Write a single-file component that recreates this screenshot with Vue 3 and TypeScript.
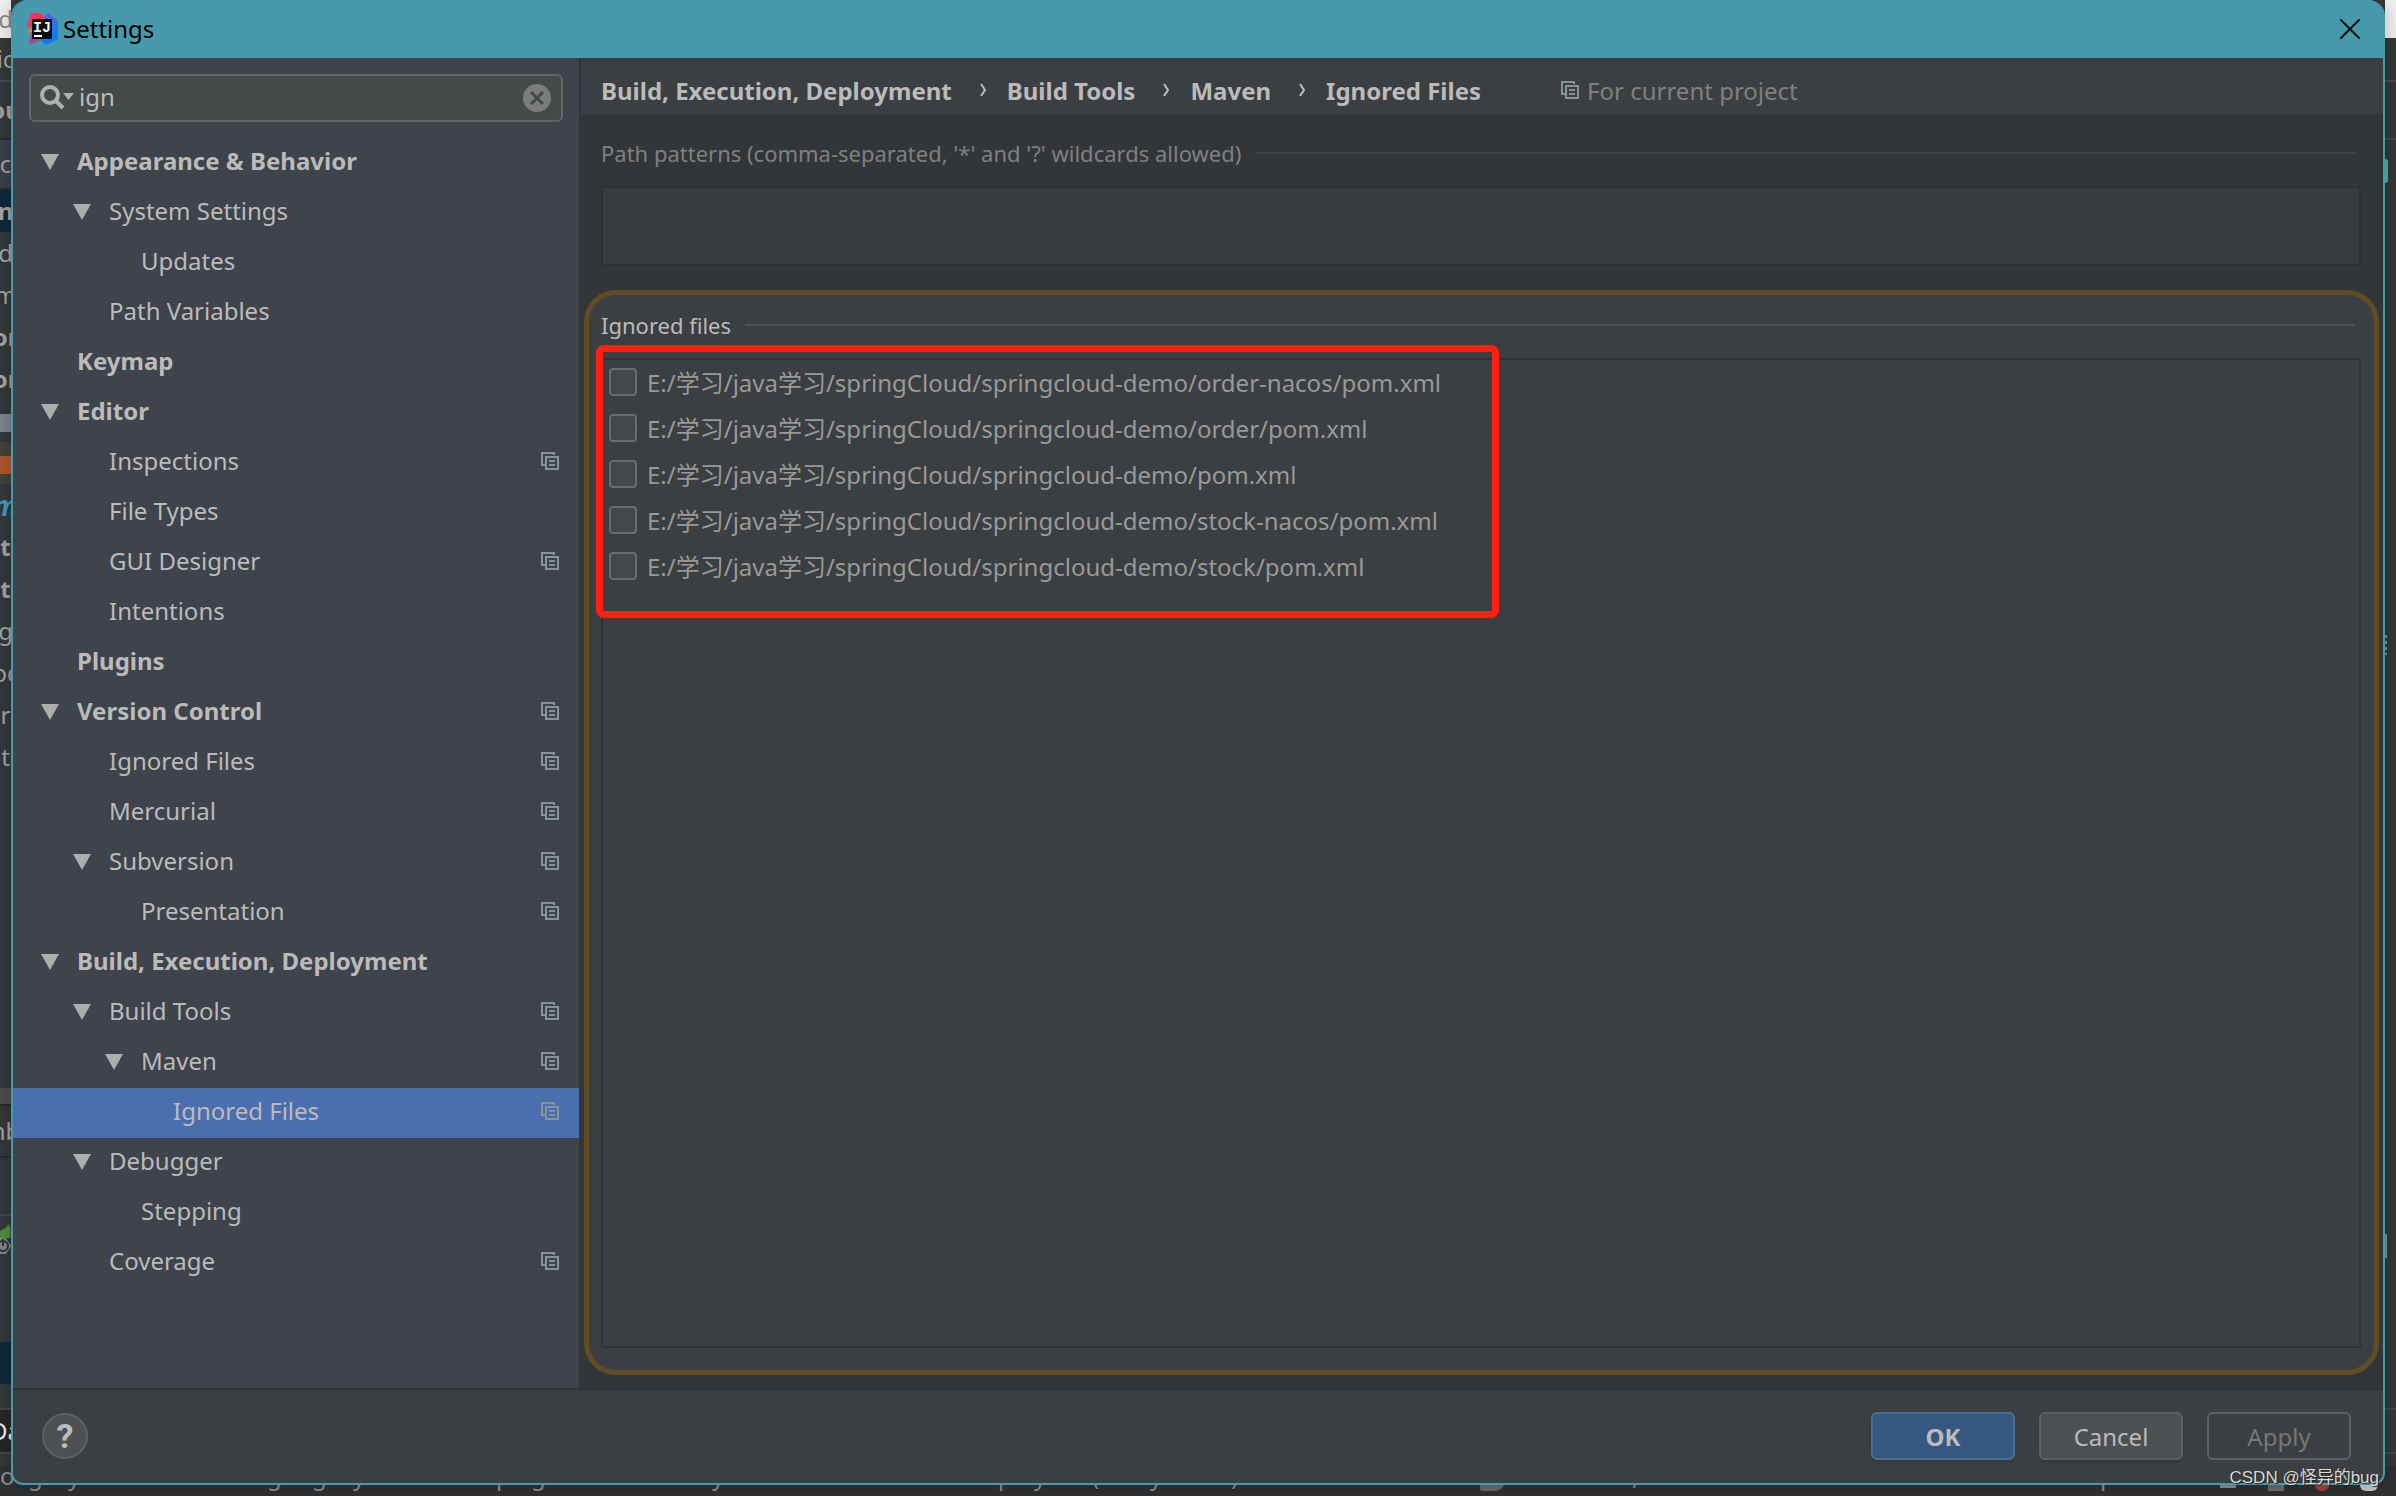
<script setup lang="ts">
import { ref } from 'vue'

interface TreeNode {
  label: string
  depth: number
  open?: boolean
  bold?: boolean
  project?: boolean
  selected?: boolean
}

interface EdgeRow {
  text: string
  kind?: string
}

const query = ref('ign')
const patterns = ref('')

const nodes: TreeNode[] = [
  { label: 'Appearance & Behavior', depth: 0, open: true, bold: true },
  { label: 'System Settings', depth: 1, open: true },
  { label: 'Updates', depth: 2 },
  { label: 'Path Variables', depth: 1 },
  { label: 'Keymap', depth: 0, bold: true },
  { label: 'Editor', depth: 0, open: true, bold: true },
  { label: 'Inspections', depth: 1, project: true },
  { label: 'File Types', depth: 1 },
  { label: 'GUI Designer', depth: 1, project: true },
  { label: 'Intentions', depth: 1 },
  { label: 'Plugins', depth: 0, bold: true },
  { label: 'Version Control', depth: 0, open: true, bold: true, project: true },
  { label: 'Ignored Files', depth: 1, project: true },
  { label: 'Mercurial', depth: 1, project: true },
  { label: 'Subversion', depth: 1, open: true, project: true },
  { label: 'Presentation', depth: 2, project: true },
  { label: 'Build, Execution, Deployment', depth: 0, open: true, bold: true },
  { label: 'Build Tools', depth: 1, open: true, project: true },
  { label: 'Maven', depth: 2, open: true, project: true },
  { label: 'Ignored Files', depth: 3, project: true, selected: true },
  { label: 'Debugger', depth: 1, open: true },
  { label: 'Stepping', depth: 2 },
  { label: 'Coverage', depth: 1, project: true },
]

const crumbs = ['Build, Execution, Deployment', 'Build Tools', 'Maven', 'Ignored Files']

const files = ref(
  ['order-nacos/pom.xml', 'order/pom.xml', 'pom.xml', 'stock-nacos/pom.xml', 'stock/pom.xml'].map((f) => ({
    path: 'E:/学习/java学习/springCloud/springcloud-demo/' + f,
    ignored: false,
  })),
)

const edgeRows: EdgeRow[] = [
  { text: 'n', kind: 'navy strong' },
  { text: 'd' },
  { text: 'm' },
  { text: 'or', kind: 'strong' },
  { text: 'or', kind: 'strong' },
  { text: '', kind: 'grey-mark' },
  { text: '', kind: 'orange-mark' },
  { text: 'm', kind: 'module' },
  { text: 't', kind: 'strong' },
  { text: 't', kind: 'strong' },
  { text: 'g' },
  { text: 'oc' },
  { text: 'r' },
  { text: 't' },
]

const statusGlyphs = [
  { ch: 'o', x: 0 },
  { ch: 'g', x: 28 },
  { ch: 'y', x: 68 },
  { ch: 'g', x: 267 },
  { ch: 'g', x: 312 },
  { ch: 'y', x: 353 },
  { ch: 'p', x: 496 },
  { ch: 'g', x: 531 },
  { ch: 'y', x: 712 },
  { ch: 'p', x: 998 },
  { ch: 'y', x: 1034 },
  { ch: '(', x: 1092 },
  { ch: 'y', x: 1150 },
  { ch: ')', x: 1231 },
  { ch: ',', x: 1632 },
  { ch: 'p', x: 2100 },
]
</script>

<template>
  <div class="screen">
    <div class="backdrop" aria-hidden="true">
      <div class="edge">
        <div class="edge-top">d</div>
        <div class="edge-menu">ic</div>
        <div class="edge-bar strong">ou</div>
        <div class="edge-tab">c</div>
        <div v-for="(r, i) in edgeRows" :key="i" class="edge-row" :class="r.kind">{{ r.text }}</div>
        <div class="edge-space"></div>
        <div class="edge-split"></div>
        <div class="edge-head">nb</div>
        <div class="edge-tools"></div>
        <div class="edge-run">
          <svg width="11" height="32" viewBox="0 0 11 32">
            <path d="M0 7C4 5 7 3 9 0C11 6 11 11 10 14H0Z" fill="#4f8f3a" />
            <path d="M-4 14H6L11 22L6 30H-4Z" fill="#7d8990" />
            <circle cx="3" cy="22" r="5" fill="none" stroke="#2f3436" stroke-width="2" />
            <path d="M3 15V22" stroke="#2f3436" stroke-width="2" />
          </svg>
        </div>
        <div class="edge-navy"></div>
        <div class="edge-gap"></div>
        <div class="edge-data">Da</div>
      </div>
      <div class="edge edge-right">
        <div class="edge-top"></div>
        <div class="edge-menu"></div>
        <div class="edge-bar"></div>
        <div class="edge-pill"></div>
        <div class="edge-ticks"></div>
        <div class="edge-mark"></div>
        <div class="edge-data plain"></div>
      </div>
      <div class="status">
        <span v-for="g in statusGlyphs" :key="g.x" :style="{ left: g.x + 'px' }">{{ g.ch }}</span>
        <i class="blob grey"></i>
        <i class="blob light"></i>
        <i class="blob dim"></i>
        <i class="blob red"></i>
        <i class="blob white"></i>
      </div>
    </div>

    <main class="dialog">
      <header class="titlebar">
        <svg class="logo" width="32" height="32" viewBox="0 0 32 32">
          <defs>
            <linearGradient id="lg-blue" x1="0" y1="0" x2="0.4" y2="1">
              <stop offset="0" stop-color="#6b57d2" />
              <stop offset="0.5" stop-color="#2d74e8" />
              <stop offset="1" stop-color="#087cfa" />
            </linearGradient>
          </defs>
          <path d="M16 5L21 0L31 8V26L19 32L12 26Z" fill="url(#lg-blue)" />
          <path d="M4 0H13L20 7V14H0Z" fill="#fe315d" />
          <path d="M5 14L1 18L5 22Z" fill="#f97a12" />
          <path d="M4 19L2 32L16 26V19Z" fill="#9a4c9c" />
          <rect x="5" y="6" width="20" height="20" fill="#0a0a0a" />
          <text class="logo-text" x="6" y="19">IJ</text>
          <path d="M7 23H15" stroke="#fff" stroke-width="2" />
        </svg>
        <h1>Settings</h1>
        <button class="close" type="button" aria-label="Close">
          <svg width="20" height="20" viewBox="0 0 20 20"><path d="M0 0L20 20M20 0L0 20" stroke="#111" stroke-width="2" /></svg>
        </button>
      </header>

      <div class="body">
        <aside class="sidebar">
          <label class="search">
            <svg width="36" height="26" viewBox="0 0 36 26">
              <circle cx="10" cy="10" r="8" fill="none" stroke="#afb1b3" stroke-width="4" />
              <path d="M15 15L23 23" stroke="#afb1b3" stroke-width="4" />
              <path d="M23 8H34L28.500 15Z" fill="#afb1b3" />
            </svg>
            <input v-model="query" type="text" aria-label="Search settings" />
            <button type="button" class="clear" aria-label="Clear search">
              <svg width="28" height="28" viewBox="0 0 28 28">
                <circle cx="14" cy="14" r="14" fill="#7b7c7c" />
                <path d="M8 8L20 20M20 8L8 20" stroke="#45494a" stroke-width="3" />
              </svg>
            </button>
          </label>
          <nav class="tree">
            <a
              v-for="(n, i) in nodes"
              :key="i"
              href="#"
              class="node"
              :class="['depth-' + n.depth, { bold: n.bold, selected: n.selected }]"
            >
              <span class="toggle">
                <svg v-if="n.open" width="18" height="16" viewBox="0 0 18 16"><path d="M0 0H18L9 16Z" fill="#adadad" /></svg>
              </span>
              <span class="node-label">{{ n.label }}</span>
              <svg v-if="n.project" class="copy" width="18" height="18" viewBox="0 0 18 18">
                <path d="M4 13H1V1H13V3" fill="none" stroke="currentColor" stroke-width="2" />
                <path d="M5 5H17V17H5ZM8 9H14M8 13H14" fill="none" stroke="currentColor" stroke-width="2" />
              </svg>
            </a>
          </nav>
        </aside>

        <section class="content">
          <div class="crumbs">
            <template v-for="(c, i) in crumbs" :key="c">
              <svg v-if="i" class="chevron" width="7" height="14" viewBox="0 0 7 14">
                <path d="M1 1L5 7L1 13" fill="none" stroke="#bbb" stroke-width="2" />
              </svg>
              <a href="#">{{ c }}</a>
            </template>
            <span class="scope">
              <svg class="copy" width="18" height="18" viewBox="0 0 18 18">
                <path d="M4 13H1V1H13V3" fill="none" stroke="currentColor" stroke-width="2" />
                <path d="M5 5H17V17H5ZM8 9H14M8 13H14" fill="none" stroke="currentColor" stroke-width="2" />
              </svg>
              For current project
            </span>
          </div>

          <div class="patterns">
            <label class="group-title" for="patterns">Path patterns (comma-separated, '*' and '?' wildcards allowed)</label>
            <textarea id="patterns" v-model="patterns"></textarea>
          </div>

          <div class="highlight">
            <h2 class="group-title">Ignored files</h2>
            <div class="list">
              <label v-for="f in files" :key="f.path" class="file">
                <input v-model="f.ignored" type="checkbox" />
                <span>{{ f.path }}</span>
              </label>
              <div class="marker"></div>
            </div>
          </div>
        </section>
      </div>

      <footer class="footer">
        <button type="button" class="help">?</button>
        <button type="button" class="btn primary">OK</button>
        <button type="button" class="btn">Cancel</button>
        <button type="button" class="btn" disabled>Apply</button>
      </footer>
    </main>

    <div class="watermark">CSDN @怪异的bug</div>
  </div>
</template>

<style>
body {
  margin: 0;
  background: #333638;
}
</style>

<style scoped>
.screen {
  position: relative;
  display: flex;
  min-height: 100vh;
  overflow: hidden;
  box-sizing: border-box;
  padding: 0 11px 11px;
  font-family: 'Noto Sans', 'Noto Sans CJK SC', sans-serif;
  font-size: 24px;
  color: #bbbbbb;
}
.screen *,
.screen *::before {
  box-sizing: border-box;
}
a {
  color: inherit;
  text-decoration: none;
}
button,
input,
textarea {
  font: inherit;
  color: inherit;
}

/* application window showing around the dialog */
.backdrop {
  position: absolute;
  inset: 0;
  background: #353839;
}
.edge {
  position: absolute;
  top: 0;
  left: 0;
  width: 11px;
  height: 100%;
  overflow: hidden;
  display: flex;
  flex-direction: column;
  color: #a5a5a5;
}
.edge-right {
  left: auto;
  right: 0;
}
.edge > div {
  display: flex;
  flex-shrink: 0;
  align-items: center;
  justify-content: center;
  line-height: 42px;
}
.edge-top {
  height: 38px;
  background: #f1f1f1;
  color: #8a8a8a;
}
.edge-menu {
  height: 44px;
  border-bottom: 2px solid #4b4b4b;
}
.edge-bar {
  height: 58px;
  border-bottom: 2px solid #2b2b2b;
}
.edge-right .edge-bar {
  border-color: #46484a;
}
.edge-tab {
  height: 50px;
  background: #38424e;
  border-bottom: 2px solid #2b2b2b;
}
.edge-row {
  height: 42px;
}
.strong {
  font-weight: 700;
}
.navy,
.edge-navy {
  background: #0d293e;
}
.grey-mark {
  border: solid transparent;
  border-width: 14px 0 10px;
  background: #7b868c padding-box;
}
.orange-mark {
  background: linear-gradient(#45423a 14px, #b0582e 14px 32px, #45423a 32px);
}
.module {
  color: #3c9cc4;
  font-size: 28px;
  font-style: italic;
  font-weight: 700;
}
.edge-space {
  height: 310px;
}
.edge-split {
  height: 18px;
  background: #4b4d4e;
  border-bottom: 2px solid #2b2b2b;
}
.edge-head {
  height: 52px;
  border-bottom: 2px solid #2b2b2b;
}
.edge-tools {
  height: 58px;
  border-bottom: 2px solid #444748;
}
.edge-run {
  height: 48px;
}
.edge-navy {
  height: 42px;
  margin-top: 78px;
}
.edge-gap {
  height: 24px;
}
.edge-data {
  height: 46px;
  border: solid #444748;
  border-width: 2px 0;
  background: #242627;
  color: #f0f0f0;
}
.edge-data.plain {
  background: none;
}
.edge-pill {
  width: 3px;
  height: 24px;
  margin: 19px 8px 0 0;
  border-radius: 0 3px 3px 0;
  background: #36c29a;
}
.edge-ticks {
  width: 2px;
  height: 20px;
  margin-top: 452px;
  background: repeating-linear-gradient(#8b8d8e 0 3px, transparent 3px 6px);
}
.edge-mark {
  width: 2px;
  height: 24px;
  margin: 579px 0 150px;
  background: #8b8d8e;
}
.status {
  position: absolute;
  inset: auto 0 0 0;
  height: 30px;
  line-height: 32px;
  background: #2f3132;
  overflow: hidden;
  color: #8f9192;
}
.status span {
  position: absolute;
  top: -6px;
}
.blob {
  position: absolute;
  bottom: 5px;
  height: 10px;
}
.blob.grey {
  left: 1480px;
  width: 25px;
  border-radius: 0 0 10px 2px;
  background: #696b6c;
}
.blob.light {
  right: 160px;
  width: 16px;
  bottom: 8px;
  background: #8b8d8e;
}
.blob.dim {
  right: 112px;
  width: 16px;
  background: #6b6d6e;
}
.blob.red {
  right: 66px;
  width: 16px;
  border-radius: 0 0 8px 8px;
  background: #a8403a;
}
.blob.white {
  right: 18px;
  width: 18px;
  border-radius: 0 0 6px 6px;
  background: #c9cbcc;
}

/* dialog frame */
.dialog {
  position: relative;
  flex: 1;
  min-width: 0;
  display: flex;
  flex-direction: column;
  overflow: hidden;
  border: solid #469aab;
  border-width: 0 2px 2px;
  border-radius: 16px 16px 12px 12px;
  background: #3c3f41;
  box-shadow: 0 0 20px rgba(0, 0, 0, 0.25);
}
.titlebar {
  display: flex;
  align-items: center;
  gap: 4px;
  height: 58px;
  padding: 0 23px 0 14px;
  background: #469aab;
  color: #000;
}
.logo-text {
  fill: #fff;
  font-family: 'Liberation Mono', monospace;
  font-size: 15px;
  font-weight: 700;
}
h1 {
  flex: 1;
  margin: 0;
  padding-bottom: 2px;
  font-size: 24px;
  font-weight: 400;
}
.close {
  display: flex;
  padding: 0;
  border: 0;
  background: none;
}
.body {
  flex: 1;
  display: flex;
}
.sidebar {
  flex: none;
  width: 568px;
  border-right: 2px solid #333536;
  background: #3f434c;
}
.search {
  display: flex;
  align-items: center;
  height: 48px;
  margin: 16px;
  padding: 0 10px 0 9px;
  border: 2px solid #646464;
  border-radius: 6px;
  background: #45494a;
}
.search input {
  flex: 1;
  min-width: 0;
  height: 40px;
  padding: 0 0 4px 3px;
  border: 0;
  outline: 0;
  background: none;
}
.clear {
  display: flex;
  padding: 0;
  border: 0;
  background: none;
}
.node {
  display: flex;
  align-items: center;
  height: 50px;
  padding: 0 20px 4px 28px;
}
.depth-1 {
  padding-left: 60px;
}
.depth-2 {
  padding-left: 92px;
}
.depth-3 {
  padding-left: 124px;
}
.toggle {
  display: flex;
  flex: none;
  width: 36px;
  padding-top: 2px;
}
.node-label {
  flex: 1;
  padding-bottom: 2px;
  white-space: nowrap;
}
.bold {
  font-weight: 700;
}
.selected {
  background: #4b6eaf;
}
.copy {
  flex: none;
  color: #87939a;
}

/* right pane */
.content {
  flex: 1;
  min-width: 0;
  display: flex;
  flex-direction: column;
  background: #333638;
}
.crumbs {
  display: flex;
  align-items: center;
  height: 56px;
  padding: 8px 20px 0;
  background: #3c3f41;
  font-weight: 700;
  white-space: nowrap;
}
.chevron {
  margin: 0 20px 0 28px;
}
.scope {
  display: flex;
  align-items: center;
  gap: 8px;
  margin-left: 80px;
  color: #808080;
  font-weight: 400;
}
.group-title {
  display: flex;
  align-items: center;
  gap: 14px;
  margin: 0;
  font-size: 22px;
  font-weight: 400;
  white-space: nowrap;
}
.group-title::after {
  content: '';
  flex: 1;
  height: 2px;
  margin-right: 6px;
  background: #515151;
}
.patterns {
  padding: 0 22px 24px 20px;
  color: #808080;
}
.patterns .group-title {
  height: 72px;
  padding-top: 6px;
}
.patterns .group-title::after {
  background: #404344;
}
.patterns textarea {
  display: block;
  width: 100%;
  height: 80px;
  border: 2px solid #2e3031;
  outline: 0;
  resize: none;
  background: #393c3e;
}
.highlight {
  flex: 1;
  display: flex;
  flex-direction: column;
  margin: 0 4px 13px 3px;
  padding: 0 13px 22px 12px;
  border: 5px solid #604d26;
  border-radius: 32px;
  background: #3c3f41;
}
.highlight .group-title {
  height: 63px;
  padding-bottom: 4px;
}
.list {
  position: relative;
  flex: 1;
  padding: 8px 6px;
  border: 2px solid #323232;
}
.file {
  display: flex;
  gap: 10px;
  height: 46px;
  color: #999999;
  white-space: nowrap;
}
.file input {
  flex: none;
  appearance: none;
  width: 28px;
  height: 28px;
  margin: 0;
  border: 2px solid #6b6b6b;
  border-radius: 4px;
  background: #43494a;
}
.file span {
  height: 30px;
  line-height: 30px;
}
.marker {
  position: absolute;
  top: -15px;
  left: -7px;
  width: 903px;
  height: 273px;
  border: 7px solid #ff2011;
  border-radius: 8px;
  pointer-events: none;
}

.footer {
  display: flex;
  align-items: center;
  gap: 24px;
  padding: 22px 32px 23px 29px;
  border-top: 2px solid #323232;
}
.btn {
  width: 144px;
  height: 48px;
  padding: 0;
  border: 2px solid #5e6060;
  border-radius: 6px;
  background: #4c5052;
  box-shadow: 0 3px 2px rgba(0, 0, 0, 0.1);
}
.primary {
  border-color: #4c708c;
  background: #365880;
  font-weight: 700;
}
.btn:disabled {
  background: none;
  box-shadow: none;
  color: #777777;
}
.help {
  width: 46px;
  height: 46px;
  margin-right: auto;
  padding: 0;
  border: 2px solid #5e6060;
  border-radius: 50%;
  background: #4c5052;
  font-family: Roboto, sans-serif;
  font-size: 34px;
  font-weight: 700;
  line-height: 42px;
}
.watermark {
  position: absolute;
  right: 17px;
  bottom: 8px;
  color: #d8d8d8;
  font-family: 'Liberation Sans', 'Noto Sans CJK SC', sans-serif;
  font-size: 17px;
  text-shadow: 1px 1px 1px #222;
}
</style>
